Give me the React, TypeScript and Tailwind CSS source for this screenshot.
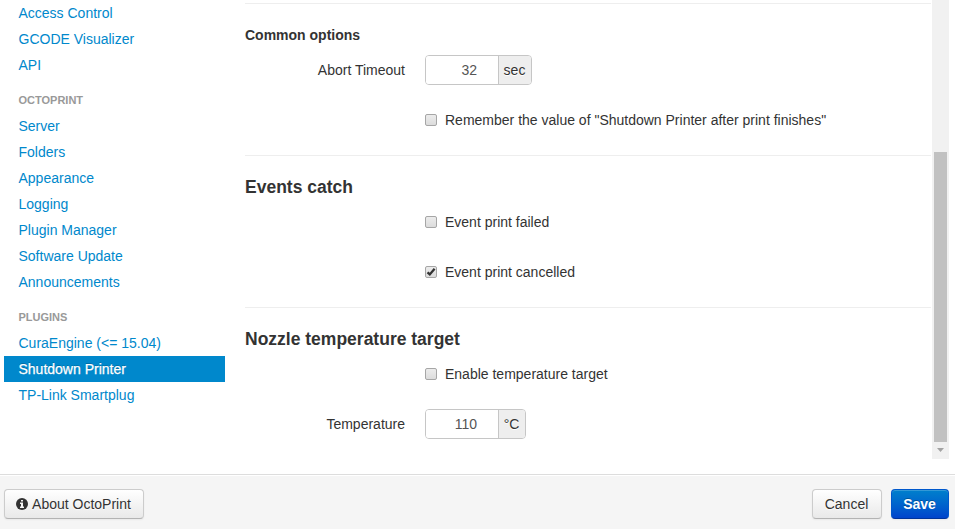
import type { ReactNode } from "react";

function NavItem({ label, active = false }: { label: string; active?: boolean }) {
  return (
    <li>
      <a
        href="#"
        className={
          active
            ? "block h-[26px] bg-[#0088cc] pl-[14.5px] leading-[26px] text-white [-webkit-text-stroke:0.25px_#ffffff] [text-shadow:0_-1px_0_rgba(0,0,0,0.2)]"
            : "block h-[26px] pl-[14.5px] leading-[26px] text-[#0088cc]"
        }
      >
        {label}
      </a>
    </li>
  );
}

function NavHeader({ label }: { label: string }) {
  return (
    <li className="h-[35px] pt-3 pl-[14.5px] text-[11px] font-bold leading-5 text-[#999999]">{label}</li>
  );
}

function Check({ label, checked = false }: { label: string; checked?: boolean }) {
  return (
    <label className="ml-[180px] flex h-5 items-center">
      <span className="flex h-3 w-3 shrink-0 items-center justify-center rounded-[2px] border border-[#a6a6a6] bg-gradient-to-b from-[#ececec] to-[#dcdcdc]">
        {checked && (
          <svg width="10" height="10" viewBox="0 0 10 10" fill="none">
            <path d="M1.5 5.3 3.8 7.4 8.6 1.8" stroke="#333333" strokeWidth="2.3" />
          </svg>
        )}
      </span>
      <span className="ml-2">{label}</span>
    </label>
  );
}

function Field({ label, value, unit, width }: { label: string; value: string; unit: string; width: string }) {
  return (
    <div className="flex h-[30px] items-center">
      <span className="w-40 text-right">{label}</span>
      <div className={`ml-5 flex h-[30px] overflow-hidden rounded border border-[#c6c6c6] ${width}`}>
        <span className="w-[72px] bg-white pr-[21px] text-right leading-7 text-[#555555]">{value}</span>
        <span className="flex-1 border-l border-[#c6c6c6] bg-[#eeeeee] pr-px text-center leading-7 [text-shadow:0_1px_0_#ffffff]">
          {unit}
        </span>
      </div>
    </div>
  );
}

function Divider() {
  return <div className="h-px w-[686px] bg-[#eeeeee]" />;
}

function Button({ children, className }: { children: ReactNode; className: string }) {
  return (
    <button
      className={`flex h-[30px] items-center justify-center rounded border shadow-[inset_0_1px_0_rgba(255,255,255,0.2),0_1px_2px_rgba(0,0,0,0.05)] ${className}`}
    >
      {children}
    </button>
  );
}

const plain =
  "border-[#cccccc] border-b-[#b3b3b3] bg-gradient-to-b from-white to-[#e9e9e9] text-[#333333] [text-shadow:0_1px_1px_rgba(255,255,255,0.75)]";

export default function App() {
  return (
    <div className="flex h-[529px] w-[955px] flex-col overflow-hidden bg-white font-['Liberation_Sans',Arial,sans-serif] text-sm leading-5 text-[#333333]">
      <div className="flex h-[459px] shrink-0">
        <nav className="w-[225px] shrink-0 pl-1">
          <ul>
            <NavItem label="Access Control" />
            <NavItem label="GCODE Visualizer" />
            <NavItem label="API" />
            <NavHeader label="OCTOPRINT" />
            <NavItem label="Server" />
            <NavItem label="Folders" />
            <NavItem label="Appearance" />
            <NavItem label="Logging" />
            <NavItem label="Plugin Manager" />
            <NavItem label="Software Update" />
            <NavItem label="Announcements" />
            <NavHeader label="PLUGINS" />
            <NavItem label="CuraEngine (<= 15.04)" />
            <NavItem label="Shutdown Printer" active />
            <NavItem label="TP-Link Smartplug" />
          </ul>
        </nav>

        <main className="ml-5 w-[687px] shrink-0 pt-[3px]">
          <Divider />
          <h4 className="mt-[21px] mb-[10px] font-bold">Common options</h4>
          <Field label="Abort Timeout" value="32" unit="sec" width="w-[107px]" />
          <div className="h-[25px]" />
          <Check label={'Remember the value of "Shutdown Printer after print finishes"'} />
          <div className="h-[25px]" />
          <Divider />
          <h3 className="mt-[21px] mb-[15px] text-[17.5px] font-bold leading-5">Events catch</h3>
          <Check label="Event print failed" />
          <div className="h-[30px]" />
          <Check label="Event print cancelled" checked />
          <div className="h-[25px]" />
          <Divider />
          <h3 className="mt-[21px] mb-[15px] text-[17.5px] font-bold leading-5">Nozzle temperature target</h3>
          <Check label="Enable temperature target" />
          <div className="h-[25px]" />
          <Field label="Temperature" value="110" unit="°C" width="w-[101px]" />
        </main>

        <div className="flex w-[17px] shrink-0 flex-col items-center bg-[#f1f1f1]">
          <div className="mt-[152px] h-[290px] w-[13px] bg-[#c1c1c1]" />
          <svg className="mt-[6px]" width="7" height="4" viewBox="0 0 7 4">
            <path d="M0 0h7L3.5 4z" fill="#a3a3a3" />
          </svg>
        </div>
      </div>

      <footer className="mt-[15px] flex flex-1 items-start border-t border-[#dddddd] bg-[#f5f5f5] pt-[14px] pr-[6px] pl-1 shadow-[inset_0_1px_0_#ffffff]">
        <Button className={`w-[140px] pr-px ${plain}`}>
          <svg className="mr-1" width="12" height="12" viewBox="0 0 12 12">
            <circle cx="6" cy="6" r="6" fill="#333333" />
            <path d="M5 2h2v1.5H5zM4 4.5h3v4h1V10H4V8.5h1V6H4z" fill="#f5f5f5" />
          </svg>
          About OctoPrint
        </Button>
        <div className="ml-auto flex gap-[9px]">
          <Button className={`w-[70px] pr-px ${plain}`}>Cancel</Button>
          <Button className="w-[58px] border-[#0058cc] border-b-[#003399] bg-gradient-to-b from-[#0080cc] to-[#0044cc] pr-px font-bold text-white [text-shadow:0_-1px_0_rgba(0,0,0,0.25)]">
            Save
          </Button>
        </div>
      </footer>
    </div>
  );
}
